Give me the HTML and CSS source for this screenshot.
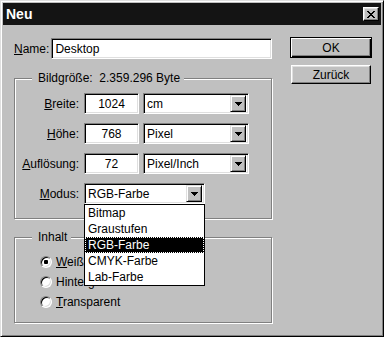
FILE: index.html
```html
<!DOCTYPE html>
<html>
<head>
  <meta charset="UTF-8">
  <title>Neu</title>
  <link rel="stylesheet" href="styles.css">
</head>

<body>
  <div class="window">
    <div class="title-bar">
      <span class="title">Neu</span>
      <span class="close-btn">
        <svg width="8" height="7" viewBox="0 0 8 7" shape-rendering="crispEdges">
          <path d="M0 0h2v1H0z M6 0h2v1H6z M1 1h2v1H1z M5 1h2v1H5z M2 2h4v1H2z M3 3h2v1H3z M2 4h4v1H2z M1 5h2v1H1z M5 5h2v1H5z M0 6h2v1H0z M6 6h2v1H6z" fill="#000"/>
        </svg>
      </span>
    </div>

    <div class="dialog">
      <div class="form">
        <div class="name-row">
          <span class="name-label"><u>N</u>ame:</span>
          <div class="field name-field">Desktop</div>
        </div>

        <div class="group size-group">
          <span class="group-title">Bildgröße:&nbsp; 2.359.296 Byte</span>

          <div class="row">
            <span class="row-label"><u>B</u>reite:</span>
            <div class="field num-field">1024</div>
            <div class="select unit-select">
              <span class="select-text">cm</span>
              <span class="drop-btn"><svg width="7" height="4" viewBox="0 0 7 4" shape-rendering="crispEdges"><path d="M0 0h7v1H0z M1 1h5v1H1z M2 2h3v1H2z M3 3h1v1H3z" fill="#000"/></svg></span>
            </div>
          </div>

          <div class="row">
            <span class="row-label"><u>H</u>öhe:</span>
            <div class="field num-field">768</div>
            <div class="select unit-select">
              <span class="select-text">Pixel</span>
              <span class="drop-btn"><svg width="7" height="4" viewBox="0 0 7 4" shape-rendering="crispEdges"><path d="M0 0h7v1H0z M1 1h5v1H1z M2 2h3v1H2z M3 3h1v1H3z" fill="#000"/></svg></span>
            </div>
          </div>

          <div class="row">
            <span class="row-label"><u>A</u>uflösung:</span>
            <div class="field num-field">72</div>
            <div class="select unit-select">
              <span class="select-text">Pixel/Inch</span>
              <span class="drop-btn"><svg width="7" height="4" viewBox="0 0 7 4" shape-rendering="crispEdges"><path d="M0 0h7v1H0z M1 1h5v1H1z M2 2h3v1H2z M3 3h1v1H3z" fill="#000"/></svg></span>
            </div>
          </div>

          <div class="row">
            <span class="row-label"><u>M</u>odus:</span>
            <div class="select mode-select">
              <span class="select-text">RGB-Farbe</span>
              <span class="drop-btn"><svg width="7" height="4" viewBox="0 0 7 4" shape-rendering="crispEdges"><path d="M0 0h7v1H0z M1 1h5v1H1z M2 2h3v1H2z M3 3h1v1H3z" fill="#000"/></svg></span>
              <ul class="drop-list">
                <li>Bitmap</li>
                <li>Graustufen</li>
                <li class="selected">RGB-Farbe</li>
                <li>CMYK-Farbe</li>
                <li>Lab-Farbe</li>
              </ul>
            </div>
          </div>
        </div>

        <div class="group content-group">
          <span class="group-title">Inhalt</span>
          <div class="radio-row"><span class="radio checked"></span><span><u>W</u>eiß</span></div>
          <div class="radio-row"><span class="radio"></span><span>Hinter<u>g</u>rund</span></div>
          <div class="radio-row"><span class="radio"></span><span><u>T</u>ransparent</span></div>
        </div>
      </div>

      <div class="buttons">
        <button class="btn default-btn">OK</button>
        <button class="btn">Zurück</button>
      </div>
    </div>
  </div>
</body>
</html>
```

FILE: styles.css
```css
* {
  box-sizing: border-box;
}

body {
  margin: 0;
  background: #c0c0c0;
  font-family: "Liberation Sans", Arial, sans-serif;
  font-size: 12px;
  color: #000;
}

u {
  text-underline-offset: 1px;
}

/* window frame */
.window {
  width: 384px;
  height: 337px;
  padding: 2px;
  background: #c0c0c0;
  border: 1px solid;
  border-color: #dfdfdf #000 #000 #dfdfdf;
  box-shadow: inset 1px 1px 0 #fff, inset -1px -1px 0 #808080;
}

.title-bar {
  height: 22px;
  background: #141414;
  display: flex;
  align-items: center;
  justify-content: space-between;
  padding: 0 2px 0 3px;
}

.title {
  color: #fff;
  font-weight: bold;
  font-size: 14px;
}

.close-btn {
  width: 16px;
  height: 14px;
  background: #c0c0c0;
  border: 1px solid;
  border-color: #fff #000 #000 #fff;
  box-shadow: inset -1px -1px 0 #808080, inset 1px 1px 0 #dfdfdf;
  display: flex;
  align-items: center;
  justify-content: center;
}

/* dialog body */
.dialog {
  display: flex;
  padding: 12px 0 0 11px;
}

.form {
  width: 258px;
  margin-top: 1px;
}

.name-row {
  display: flex;
  align-items: center;
  height: 21px;
}

.name-label {
  width: 38px;
}

.field {
  height: 21px;
  background: #fff;
  border: 1px solid;
  border-color: #808080 #fff #fff #808080;
  box-shadow: inset 1px 1px 0 #000, inset -1px -1px 0 #dfdfdf;
  display: flex;
  align-items: center;
  padding: 0 3px;
}

.name-field {
  width: 224px;
}

/* etched group boxes */
.group {
  position: relative;
  border: 1px solid #808080;
  box-shadow: 1px 1px 0 #fff, inset 1px 1px 0 #fff;
}

.group-title {
  position: absolute;
  top: -8px;
  left: 17px;
  padding: 0 4px 0 6px;
  line-height: 14px;
  background: #c0c0c0;
}

.size-group {
  margin-top: 19px;
  height: 141px;
  padding-top: 14px;
  display: flex;
  flex-direction: column;
  gap: 9px;
}

.row {
  display: flex;
  align-items: center;
  height: 21px;
}

.row-label {
  width: 64px;
  margin-right: 5px;
  text-align: right;
}

.num-field {
  width: 55px;
  justify-content: center;
}

.select {
  position: relative;
  height: 21px;
  background: #fff;
  border: 1px solid;
  border-color: #808080 #fff #fff #808080;
  box-shadow: inset 1px 1px 0 #000, inset -1px -1px 0 #dfdfdf;
  display: flex;
  align-items: center;
  padding: 2px 2px 2px 3px;
}

.select-text {
  flex: 1;
}

.unit-select {
  width: 106px;
  margin-left: 4px;
}

.mode-select {
  width: 121px;
}

.drop-btn {
  width: 16px;
  height: 17px;
  background: #c0c0c0;
  border: 1px solid;
  border-color: #dfdfdf #000 #000 #dfdfdf;
  box-shadow: inset 1px 1px 0 #fff, inset -1px -1px 0 #808080;
  display: flex;
  align-items: center;
  justify-content: center;
}

.drop-list {
  position: absolute;
  top: 20px;
  left: -1px;
  width: 121px;
  margin: 0;
  padding: 0;
  list-style: none;
  background: #fff;
  border: 1px solid #000;
  z-index: 10;
}

.drop-list li {
  height: 16px;
  line-height: 16px;
  padding-left: 3px;
}

.drop-list .selected {
  background: #000;
  color: #fff;
  outline: 1px dotted #fff;
  outline-offset: -1px;
}

.content-group {
  margin-top: 18px;
  height: 86px;
  padding: 14px 0 0 25px;
}

.radio-row {
  display: flex;
  align-items: center;
  gap: 4px;
  height: 20px;
}

.radio {
  width: 12px;
  height: 12px;
  border-radius: 50%;
  background: #fff;
  border: 1px solid;
  border-color: #808080 #fff #fff #808080;
  box-shadow: inset 1px 1px 0 #000, inset -1px -1px 0 #dfdfdf;
}

.radio.checked {
  background: radial-gradient(circle, #000 2px, #fff 2.5px);
}

/* push buttons */
.buttons {
  margin-left: 18px;
  display: flex;
  flex-direction: column;
  align-items: flex-start;
  gap: 7px;
}

.btn {
  width: 80px;
  height: 19px;
  margin-left: 1px;
  padding: 0;
  font: inherit;
  color: #000;
  background: #c0c0c0;
  border: 1px solid;
  border-color: #fff #000 #000 #fff;
  box-shadow: inset -1px -1px 0 #808080, inset 1px 1px 0 #dfdfdf;
}

.default-btn {
  width: 82px;
  height: 21px;
  margin-left: 0;
  border: 1px solid #000;
  box-shadow: inset 1px 1px 0 #fff, inset -1px -1px 0 #000, inset -2px -2px 0 #808080;
}
```
